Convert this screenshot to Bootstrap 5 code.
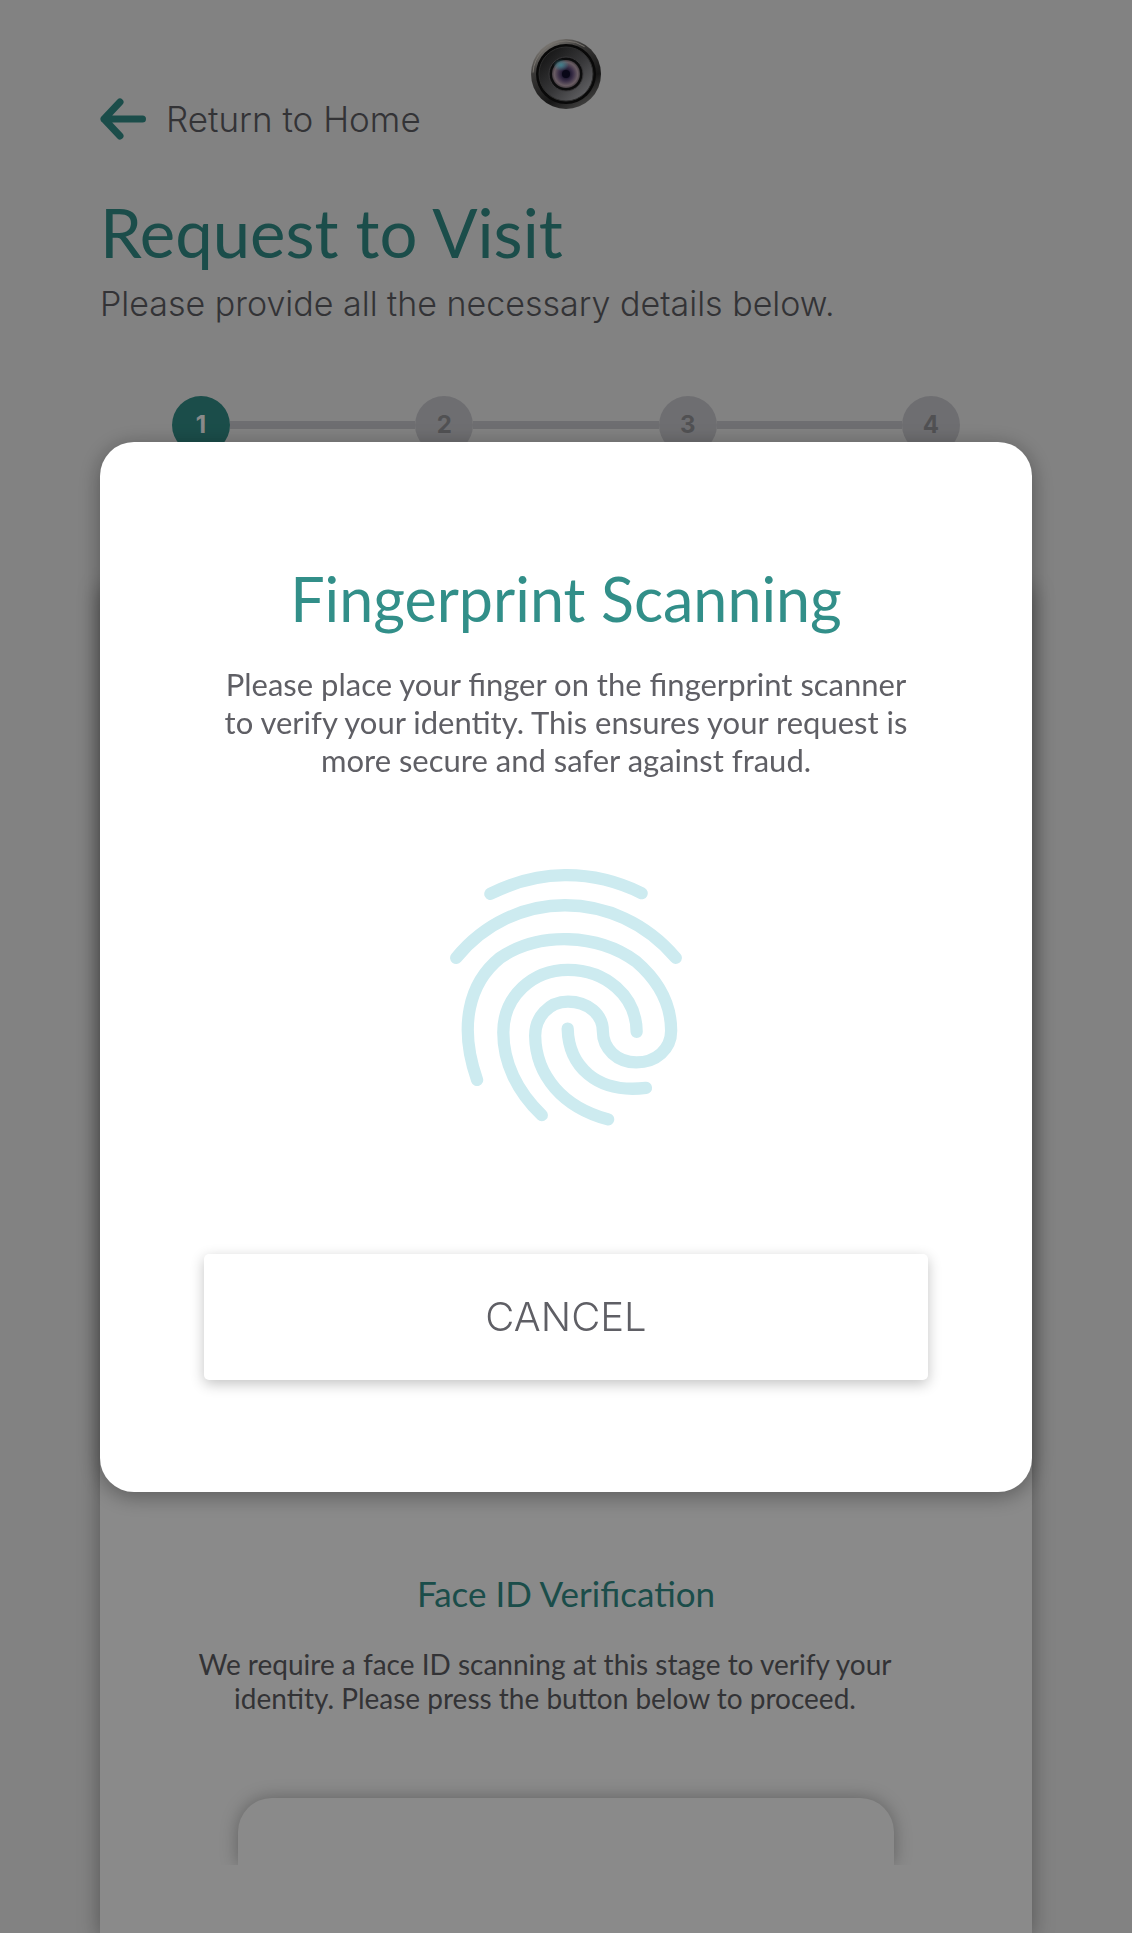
<!DOCTYPE html>
<html lang="en">
<head>
<meta charset="utf-8">
<meta name="viewport" content="width=device-width, initial-scale=1">
<title>Request to Visit</title>
<link href="https://cdn.jsdelivr.net/npm/bootstrap@5.3.0/dist/css/bootstrap.min.css" rel="stylesheet">
<style>
  :root {
    --teal: #328f89;
    --ink: #5f5f65;
    --step: #ccccd1;
    --display: Lato, "Liberation Sans", sans-serif;
    --text: Inter, "Liberation Sans", sans-serif;
  }
  body { background: #f0f0f0; color: var(--ink); font-family: var(--display); overflow: hidden; }
  .page { padding: 98px 100px 0; }
  .camera { top: 38px; width: 72px; height: 72px; z-index: 1060; }

  .back-link { gap: 20px; color: var(--ink); font: 300 35px/42px var(--text); }
  .page-title { margin: 52px 0 12px; color: var(--teal); font: 400 67px/80px var(--display); }
  .page-intro { margin: 0 0 72px; font: 300 34px/40px var(--text); }

  .stepper { padding: 0 72px; margin: 0 0 130px; }
  .step-dot { width: 58px; height: 58px; background: var(--step); color: #96969a; font: 700 24px/58px var(--text); }
  .step-dot.current { background: var(--teal); color: #fff; }
  .step-line { height: 8px; background: var(--step); }

  .stage { background: #fff; padding-bottom: 68px; box-shadow: 0 4px 20px rgba(0, 0, 0, .36); }
  .stage-title { margin: 0 0 33px; color: var(--teal); font: 400 35px/42px var(--display); }
  .stage-text { margin: 0 0 63px; padding: 0 126px 0 84px; font-size: 28px; line-height: 34px; }
  .frame-clip { padding: 20px 138px 0; }
  .frame-top { height: 67px; border-radius: 34px 34px 0 0; background: #fff; box-shadow: 0 0 18px rgba(0, 0, 0, .3); }

  .modal-backdrop { --bs-backdrop-opacity: .46; }
  .scan-dialog { max-width: none; margin: 0 100px; min-height: 100%; }
  .scan-card { padding: 121px 104px 112px; border: 0; border-radius: 34px; box-shadow: 0 4px 22px rgba(0, 0, 0, .36); color: var(--ink); }
  .scan-title { margin: 0 0 30px; color: var(--teal); font: 400 61px/72px var(--display); }
  .scan-text { margin: 0 0 71px; font-size: 31px; line-height: 38px; }
  .scan-print { width: 272px; height: 300px; margin-bottom: 104px; }
  .cancel-btn { --bs-btn-color: var(--ink); --bs-btn-bg: #fff; --bs-btn-hover-bg: #f6f6f6; --bs-btn-border-color: transparent;
    height: 126px; border: 0; border-radius: 5px; font: 300 40px/48px var(--text); box-shadow: 0 4px 14px rgba(0, 0, 0, .24); }
</style>
</head>
<body>

<div class="page d-flex flex-column min-vh-100">
  <header>
    <nav class="d-flex" aria-label="Back">
      <a href="#" class="back-link d-flex align-items-center text-decoration-none">
        <svg width="46" height="42" viewBox="0 0 46 42" fill="none" stroke="#328f89" stroke-width="7" stroke-linecap="round" stroke-linejoin="round" aria-hidden="true">
          <path d="M42.500 21H4M20 4 4 21l16 17"/>
        </svg>
        Return to Home
      </a>
    </nav>
    <h1 class="page-title">Request to Visit</h1>
    <p class="page-intro">Please provide all the necessary details below.</p>
  </header>

  <div class="stepper d-flex align-items-center">
    <span class="step-dot current rounded-circle text-center flex-shrink-0">1</span>
    <span class="step-line flex-grow-1"></span>
    <span class="step-dot rounded-circle text-center flex-shrink-0">2</span>
    <span class="step-line flex-grow-1"></span>
    <span class="step-dot rounded-circle text-center flex-shrink-0">3</span>
    <span class="step-line flex-grow-1"></span>
    <span class="step-dot rounded-circle text-center flex-shrink-0">4</span>
  </div>

  <main class="stage flex-grow-1 d-flex flex-column justify-content-end text-center">
    <h2 class="stage-title">Face ID Verification</h2>
    <p class="stage-text">We require a face ID scanning at this stage to verify your identity. Please press the button below to proceed.</p>
    <div class="frame-clip overflow-hidden">
      <div class="frame-top"></div>
    </div>
  </main>
</div>

<div class="modal-backdrop show"></div>

<div class="modal d-block" role="dialog" aria-modal="true" aria-labelledby="scanTitle">
  <div class="modal-dialog modal-dialog-centered scan-dialog">
    <div class="modal-content scan-card text-center">
      <h2 class="scan-title" id="scanTitle">Fingerprint Scanning</h2>
      <p class="scan-text px-2">Please place your finger on the fingerprint scanner to verify your identity. This ensures your request is more secure and safer against fraud.</p>
      <svg class="scan-print mx-auto" viewBox="0 0 820 904" fill="none" stroke="#cdebf0" stroke-width="37" stroke-linecap="round" stroke-linejoin="round" role="img" aria-label="Fingerprint">
        <path d="M182 132C325 60 485 55 638 130"/>
        <path d="M79 325C250 115 560 112 741 325"/>
        <path d="M142 693C85 530 118 400 211 325C330 245 505 252 620 335C690 395 727 465 727 545C727 600 682 640 622 640C565 640 521 600 521 545C521 495 475 457 416 457C357 457 317 505 317 560C319 680 400 775 537 812"/>
        <path d="M337 799C262 728 221 640 221 550C221 440 310 361 416 361C530 361 622 440 623 548"/>
        <path d="M415 538C418 650 500 735 651 717"/>
      </svg>
      <button type="button" class="btn cancel-btn w-100">CANCEL</button>
    </div>
  </div>
</div>

<svg class="camera position-absolute start-50 translate-middle-x" viewBox="0 0 72 72" aria-hidden="true">
  <defs>
    <linearGradient id="rim" x1=".2" y1="0" x2=".8" y2="1">
      <stop offset="0" stop-color="#8d8983"/><stop offset=".3" stop-color="#383736"/><stop offset=".7" stop-color="#161616"/><stop offset="1" stop-color="#4b4a49"/>
    </linearGradient>
    <linearGradient id="barrel" x1=".1" y1=".1" x2=".9" y2=".9">
      <stop offset="0" stop-color="#151515"/><stop offset=".55" stop-color="#38383a"/><stop offset="1" stop-color="#626265"/>
    </linearGradient>
    <radialGradient id="glass" cx=".5" cy=".5" r=".52">
      <stop offset="0" stop-color="#080716"/><stop offset=".2" stop-color="#151128"/><stop offset=".5" stop-color="#3d3149"/><stop offset=".8" stop-color="#6a5d64"/><stop offset="1" stop-color="#3b3539"/>
    </radialGradient>
    <radialGradient id="glint"><stop offset="0" stop-color="#3f7f8c"/><stop offset="1" stop-color="#3f7f8c" stop-opacity="0"/></radialGradient>
  </defs>
  <circle cx="36" cy="36" r="35" fill="url(#rim)"/>
  <circle cx="36" cy="36" r="33" fill="none" stroke="#77736e" stroke-width="1" stroke-dasharray="70 138" stroke-dashoffset="-105"/>
  <circle cx="36" cy="36" r="30" fill="#090909"/>
  <circle cx="36" cy="36" r="27" fill="url(#barrel)" stroke="#2e2e2e"/>
  <circle cx="36" cy="36" r="17" fill="#0c0c0d" stroke="#39383a"/>
  <circle cx="36" cy="36" r="14" fill="url(#glass)"/>
  <ellipse cx="31" cy="27" rx="8" ry="6" fill="url(#glint)"/>
  <circle cx="36" cy="36" r="4" fill="#080717"/>
</svg>

<script src="https://cdn.jsdelivr.net/npm/bootstrap@5.3.0/dist/js/bootstrap.bundle.min.js"></script>
</body>
</html>
